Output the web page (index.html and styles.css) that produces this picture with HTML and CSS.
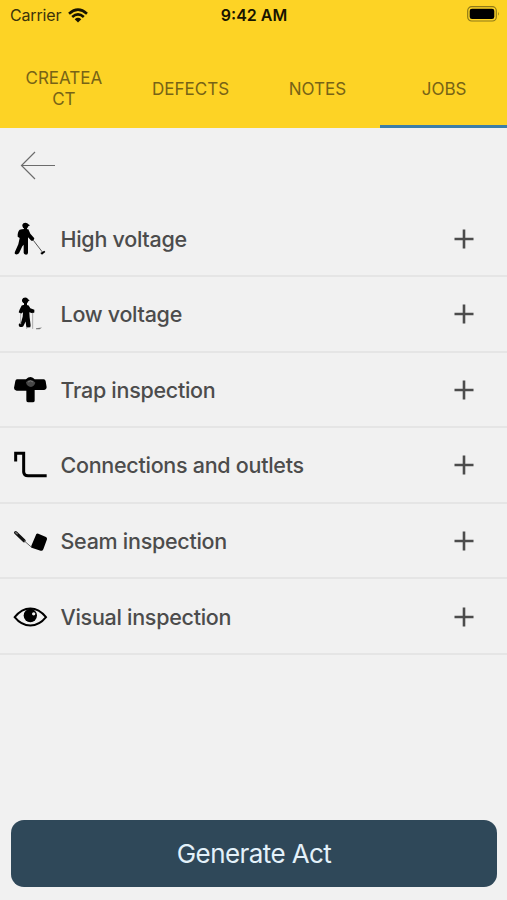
FILE: index.html
```html
<!DOCTYPE html>
<html lang="en">
<head>
<meta charset="utf-8">
<title>Jobs</title>
<link rel="stylesheet" href="styles.css">
</head>
<body>
<header class="header">
  <div class="status">
    <div class="carrier"><span class="carrier-name">Carrier</span>
      <svg class="wifi" viewBox="0 0 20 15"><g fill="none" stroke="#181400" stroke-width="2.6"><path d="M1 5.7Q10-2.3 19 5.7"/><path d="M4.2 9Q10 3.9 15.800 9"/></g><path d="M6.700 11.300Q10 8.400 13.300 11.300L10 14.600Z" fill="#181400"/></svg>
    </div>
    <div class="clock">9:42 AM</div>
    <svg class="battery" viewBox="0 0 33 16"><rect x=".7" y=".7" width="28.600" height="14.300" rx="4" fill="none" stroke="#8f7a18" stroke-width="1.200"/><rect x="2.700" y="2.700" width="24.600" height="10.300" rx="2.300" fill="#000"/><path d="M31 5.800q1.600 2 0 4z" fill="#8f7a18"/></svg>
  </div>
  <nav class="tabs">
    <a class="tab">CREATEA<br>CT</a>
    <a class="tab">DEFECTS</a>
    <a class="tab">NOTES</a>
    <a class="tab active">JOBS</a>
  </nav>
</header>
<main class="content">
  <div class="toolbar">
    <svg class="back" viewBox="0 0 36 30"><path d="M35 15.500H1.500M15 2L1.500 15.500 15 29" fill="none" stroke="#6c6c6c" stroke-width="1.200"/></svg>
  </div>
  <ul class="list">
    <li class="row">
      <svg class="icon" viewBox="36 33 108 108"><path d="M67 44Q69 38 76 38 83 38 85 43L90 46 85 49Q84 56 76 57 68 56 67 48Z"/><path d="M72 54H81V62H72Z"/><path d="M59 59Q70 55 85 58L91 71 103 85 100 92 94 92 84 82V128Q84 134 78 134 71 133 71 128V104L67 109 57 130Q52 135 45 132 43 129 45 125L55 103 59 84 53 80Q52 66 59 59Z"/><path d="M100 91L127 126" fill="none" stroke="#555" stroke-width="3"/><path d="M121 129L133 122 136 126 126 134Z"/></svg>
      <span class="label">High voltage</span><svg class="plus" viewBox="0 0 20 20"><path d="M10 .5v19M.5 10h19"/></svg>
    </li>
    <li class="row">
      <svg class="icon" viewBox="36 31.500 108 108"><path d="M66 43Q68 36 76 36 83 37 84 41L89 44 85 47Q83 54 77 55 68 54 66 47Z"/><path d="M72 52H81V60H72Z"/><path d="M65 60Q75 56 86 60L91 68 103 73V81L97 83 88 80 89 96 92 119 91 125 79 126 77 108 70 122Q63 127 57 122L56 117 64 108 68 94 69 80 63 85 56 80 59 72Z"/><path d="M62 84V116M98 82V130M80 124V130" fill="none" stroke="#aaa" stroke-width="3"/><path d="M108 128L126 126 119 131H108Z" fill="#777"/></svg>
      <span class="label">Low voltage</span><svg class="plus" viewBox="0 0 20 20"><path d="M10 .5v19M.5 10h19"/></svg>
    </li>
    <li class="row">
      <svg class="icon" viewBox="36 36 108 108"><path d="M51 58H78Q84 51 92 51 99 52 104 58H131Q136 58 137 64L140 82Q140 89 133 90H104V122Q104 127 98 127H84Q79 127 79 121V92H50Q42 91 42 84L46 63Q47 58 51 58Z"/><path d="M78 67Q83 60 91 60 101 61 106 68 102 79 93 81 80 80 78 67Z" fill="#484848"/><path d="M84 66Q91 59 99 66" fill="none" stroke="#777" stroke-width="3"/></svg>
      <span class="label">Trap inspection</span><svg class="plus" viewBox="0 0 20 20"><path d="M10 .5v19M.5 10h19"/></svg>
    </li>
    <li class="row">
      <svg class="icon" viewBox="36 34.500 108 108"><path d="M47 78V53H71V110Q72 121 84 121H140" fill="none" stroke="#000" stroke-width="9"/></svg>
      <span class="label">Connections and outlets</span><svg class="plus" viewBox="0 0 20 20"><path d="M10 .5v19M.5 10h19"/></svg>
    </li>
    <li class="row">
      <svg class="icon" viewBox="36 33 108 108"><path d="M47 62L72 86" stroke="#111" stroke-width="10" stroke-linecap="round"/><path d="M46 61L53 67" stroke="#777" stroke-width="4"/><path d="M72 86L96 107" stroke="#666" stroke-width="3"/><path d="M109 66Q111 64 115 65L138 75Q142 78 141 82L130 112Q127 118 122 116L97 108Q92 106 94 101Z"/></svg>
      <span class="label">Seam inspection</span><svg class="plus" viewBox="0 0 20 20"><path d="M10 .5v19M.5 10h19"/></svg>
    </li>
    <li class="row">
      <svg class="icon" viewBox="36 31.500 108 108"><path d="M44 86Q65 60 91 60T138 86Q118 111 91 111T44 86Z" fill="none" stroke="#000" stroke-width="6"/><circle cx="91" cy="81" r="20"/><circle cx="101" cy="76" r="5" fill="#f1f1f1"/></svg>
      <span class="label">Visual inspection</span><svg class="plus" viewBox="0 0 20 20"><path d="M10 .5v19M.5 10h19"/></svg>
    </li>
  </ul>
  <button class="generate">Generate Act</button>
</main>
</body>
</html>
```

FILE: styles.css
```css
* { box-sizing: border-box; }
body {
  margin: 0;
  height: 900px;
  display: flex;
  flex-direction: column;
  background: #f1f1f1;
  font-family: Inter, "Liberation Sans", sans-serif;
  color: #4c4c4c;
}
.header {
  height: 128px;
  display: flex;
  flex-direction: column;
  background: #fdd325;
}
.status {
  height: 49px;
  padding: 5px 7px 0 10px;
  display: grid;
  grid-template-columns: 1fr auto 1fr;
  align-items: start;
  color: #181400;
}
.carrier { display: flex; align-items: center; gap: 7px; height: 20px; }
.carrier-name { font-size: 16px; line-height: 20px; letter-spacing: -0.15px; color: #3d330a; }
.wifi { width: 20px; height: 15px; }
.clock { font-size: 16px; font-weight: 600; line-height: 20px; margin-right: 2px; }
.battery { width: 33px; height: 16px; justify-self: end; margin-top: 1px; }
.tabs { flex: 1; display: grid; grid-template-columns: repeat(4, 1fr); }
.tab {
  display: flex;
  align-items: center;
  justify-content: center;
  text-align: center;
  padding: 4px 0 0 1px;
  border-bottom: 3px solid transparent;
  font-size: 17px;
  line-height: 21px;
  color: #776316;
}
.tab.active { border-bottom-color: #3b7ea8; }
.content { flex: 1; display: flex; flex-direction: column; }
.toolbar { height: 73.5px; padding: 22px 20px 0; }
.back { display: block; width: 36px; height: 30px; }
.list { margin: 0; padding: 0; list-style: none; }
.row {
  height: 75.55px;
  padding: 1px 33px 0 12px;
  display: flex;
  align-items: center;
  border-bottom: 2px solid #e5e5e5;
}
.icon { width: 36px; height: 36px; margin-right: 12.5px; }
.label { flex: 1; font-size: 21.5px; font-weight: 450; line-height: 28px; letter-spacing: -0.28px; }
.plus { width: 20px; height: 20px; fill: none; stroke: #4c4c4c; stroke-width: 2.6; }
.generate {
  margin: auto 10px 13px 11px;
  height: 67px;
  border: 0;
  border-radius: 13px;
  background: #2f4859;
  color: #e3f1fa;
  font: 400 26px Inter, "Liberation Sans", sans-serif;
  letter-spacing: -0.58px;
}
```
